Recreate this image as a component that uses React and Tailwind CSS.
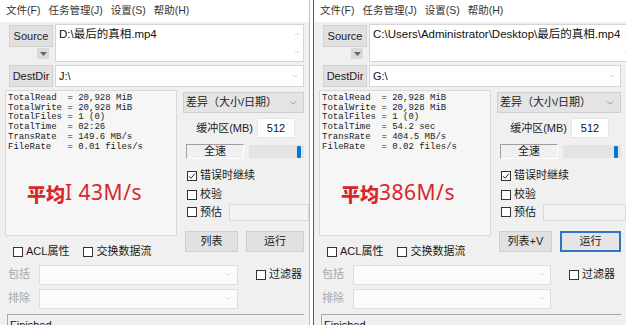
import React from 'react';
import { ChevronDown, ChevronUp } from 'lucide-react';

const UI = { fontFamily: '"Liberation Sans", "Noto Sans CJK SC", sans-serif' };
const MONO = { fontFamily: '"Liberation Mono", "DejaVu Sans Mono", monospace' };

function Check({ checked, label, className = '' }) {
  return (
    <div className={`flex items-center gap-[3px] ${className}`}>
      <div className="w-[10px] h-[10px] border border-[#333] bg-white flex items-center justify-center">
        {checked && (
          <svg width="8" height="8" viewBox="0 0 8 8">
            <path d="M1 4.2 L3 6.2 L7 1.6" fill="none" stroke="#222" strokeWidth="1" />
          </svg>
        )}
      </div>
      <span className="text-[11px] text-[#1a1a1a] leading-none">{label}</span>
    </div>
  );
}

function Combo({ className = '' }) {
  return (
    <div className={`h-[20px] bg-[#fbfbfb] border border-[#dedede] flex items-center justify-end pr-[4px] ${className}`}>
      <ChevronDown size={9} color="#c4c4c4" strokeWidth={1.5} />
    </div>
  );
}

function Window({ data, width, divider }) {
  return (
    <div className={`h-[325px] ${width} bg-[#f0f0f0] overflow-hidden ${divider}`} style={UI}>
      {/* 菜单栏 */}
      <div className="h-[22px] bg-white flex items-center gap-[8px] pl-[6px] text-[10.5px] text-[#333]">
        <span>文件(F)</span>
        <span>任务管理(J)</span>
        <span>设置(S)</span>
        <span>帮助(H)</span>
      </div>

      <div className="flex flex-col pl-[5px] pr-[5px] pt-[2px]">
        {/* Source */}
        <div className="flex h-[38px] shrink-0">
          <div className="w-[50px] pl-[4px] pr-[2px] pt-[1px] flex flex-col items-end">
            <div className="w-[44px] h-[22px] bg-[#e1e1e1] border border-[#d0d0d0] flex items-center justify-center text-[11px] text-[#222]">
              Source
            </div>
            <div className="w-[12px] h-[11px] mr-[4px] mt-[1px] bg-[#dadada] flex items-center justify-center">
              <svg width="7" height="4" viewBox="0 0 7 4"><path d="M0 0 H7 L3.5 4 Z" fill="#666" /></svg>
            </div>
          </div>
          <div className="flex-1 bg-white border border-[#d6d6d6] flex">
            <div className="flex-1 pl-[3px] pt-[1px] text-[11.5px] text-[#111] whitespace-nowrap overflow-hidden">{data.src}</div>
            <div className="w-[13px] flex flex-col items-center justify-between py-[5px]">
              <ChevronUp size={8} color="#b8b8b8" strokeWidth={1.5} />
              <ChevronDown size={8} color="#b8b8b8" strokeWidth={1.5} />
            </div>
          </div>
        </div>

        {/* DestDir */}
        <div className="flex h-[22px] mt-[3px] shrink-0">
          <div className="w-[50px] pl-[4px] pr-[2px]">
            <div className="w-[44px] h-[22px] bg-[#e1e1e1] border border-[#d0d0d0] flex items-center justify-center text-[11px] text-[#222]">
              DestDir
            </div>
          </div>
          <div className="flex-1 bg-white border border-[#d6d6d6] flex items-center pl-[3px] pr-[4px]">
            <span className="flex-1 text-[11px] text-[#111]">{data.dest}</span>
            <ChevronDown size={8} color="#a8a8a8" strokeWidth={1.5} />
          </div>
        </div>

        {/* 主区域 */}
        <div className="flex h-[168px] mt-[3px] gap-[6px] shrink-0">
          <div className="w-[172px] flex flex-col">
            <div className="h-[146px] bg-[#f6f6f6] border border-[#d8d8d8] flex flex-col">
              <pre className="pl-[2px] pt-[3px] text-[9px] leading-[9.7px] text-[#222]" style={MONO}>
                {data.stats.join('\n')}
              </pre>
              <div className="mt-[30px] flex items-end pl-[21px] text-[#d8262d]">
                <span className="text-[19px] font-black leading-none" style={{ fontFamily: '"Noto Sans CJK SC", sans-serif' }}>平均</span>
                <span className="text-[21px] leading-none tracking-[0.5px]" style={{ fontFamily: '"Noto Sans", sans-serif' }}>{data.speed}</span>
              </div>
            </div>
            <div className="flex items-center mt-[10px] pl-[8px] gap-[14px]">
              <Check label="ACL属性" />
              <Check label="交换数据流" />
            </div>
          </div>

          <div className="flex-1 flex flex-col">
            <div className="h-[21px] mt-[2px] bg-[#e4e4e4] border border-[#cfcfcf] flex items-center pl-[2px] pr-[5px] text-[11px] text-[#222]">
              <span className="flex-1">差异（大小/日期）</span>
              <ChevronDown size={10} color="#666" strokeWidth={1.5} />
            </div>
            <div className="flex items-center h-[20px] mt-[5px]">
              <span className="w-[70px] text-right text-[11px] text-[#222]">缓冲区(MB)</span>
              <div className="ml-[4px] w-[38px] h-[20px] bg-white border border-[#e6e6e6] flex items-center justify-center text-[11px] text-[#111]">512</div>
            </div>
            <div className="flex items-center h-[15px] mt-[6px] pl-[3px] gap-[5px]">
              <div className="w-[58px] h-[15px] bg-[#f0f0f0] border-t border-l border-[#a0a0a0] border-b border-r border-b-[#fff] border-r-[#fff] flex items-center justify-center text-[11px] text-[#222]">全速</div>
              <div className="flex-1 h-[13px] bg-[#e4e4e4] flex items-center justify-end pr-[3px]">
                <div className="w-[4px] h-[12px] bg-[#0078d7] rounded-[1px]" />
              </div>
            </div>
            <Check checked label="错误时继续" className="mt-[11px] pl-[4px]" />
            <Check label="校验" className="mt-[8px] pl-[4px]" />
            <div className="flex items-center mt-[3px] pl-[4px] h-[18px]">
              <Check label="预估" />
              <div className="ml-[7px] flex-1 h-[17px] bg-[#f3f3f3] border border-[#dadada] -mr-[5px]" />
            </div>
            <div className="flex mt-[10px] gap-[8px] pl-[2px]">
              <div className="w-[53px] h-[21px] bg-[#e1e1e1] border border-[#cfcfcf] flex items-center justify-center text-[11px] text-[#222]">{data.listLabel}</div>
              <div className={`flex-1 h-[21px] flex items-center justify-center text-[11px] text-[#222] ${data.focused ? 'bg-[#e5e5e5] border-2 border-[#2f73c4]' : 'bg-[#e1e1e1] border border-[#cfcfcf]'}`}>运行</div>
            </div>
          </div>
        </div>

        {/* 过滤 */}
        <div className="flex items-center h-[19px] mt-[7px] shrink-0">
          <span className="w-[34px] pl-[3px] text-[11px] text-[#a8a8a8]">包括</span>
          <Combo className={data.comboW} />
          <Check label="过滤器" className="ml-[18px]" />
        </div>
        <div className="flex items-center h-[21px] mt-[4px] shrink-0">
          <span className="w-[34px] pl-[3px] text-[11px] text-[#a8a8a8]">排除</span>
          <Combo className={data.comboW} />
        </div>

        <div className="mt-[5px] ml-[2px] border-t border-l border-[#a8a8a8] pl-[2px] pt-[2px] text-[11px] text-[#111] h-[20px] shrink-0">
          Finished
        </div>
      </div>
    </div>
  );
}

export default function App() {
  const left = {
    src: 'D:\\最后的真相.mp4',
    dest: 'J:\\',
    stats: [
      'TotalRead  = 20,928 MiB',
      'TotalWrite = 20,928 MiB',
      'TotalFiles = 1 (0)',
      'TotalTime  = 02:26',
      'TransRate  = 149.6 MB/s',
      'FileRate   = 0.01 files/s',
    ],
    speed: 'I 43M/s',
    listLabel: '列表',
    focused: false,
    comboW: 'w-[199px]',
  };
  const right = {
    src: 'C:\\Users\\Administrator\\Desktop\\最后的真相.mp4',
    dest: 'G:\\',
    stats: [
      'TotalRead  = 20,928 MiB',
      'TotalWrite = 20,928 MiB',
      'TotalFiles = 1 (0)',
      'TotalTime  = 54.2 sec',
      'TransRate  = 404.5 MB/s',
      'FileRate   = 0.02 files/s',
    ],
    speed: '386M/s',
    listLabel: '列表+V',
    focused: true,
    comboW: 'w-[198px]',
  };

  return (
    <div className="w-[626px] h-[325px] flex bg-white overflow-hidden">
      <Window data={left} width="w-[310px]" divider="border-r border-[#bdbdbd]" />
      <div className="w-[3px] bg-white" />
      <Window data={right} width="w-[313px]" divider="border-l border-[#5a5a5a]" />
    </div>
  );
}
